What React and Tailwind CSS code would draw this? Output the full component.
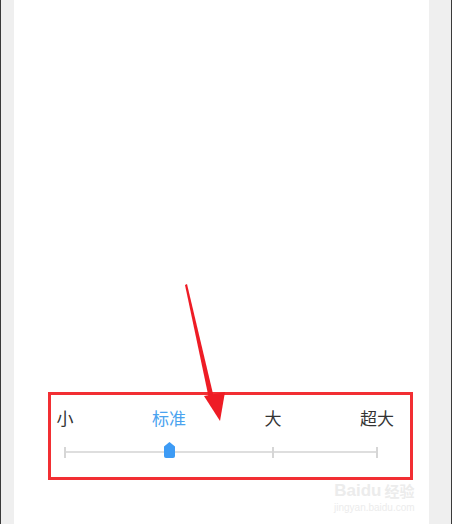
import React from 'react'

const sizes = ['小', '标准', '大', '超大']

export default function App() {
  const current = 1

  return (
    <div className="relative flex h-[524px] w-[452px] overflow-hidden bg-white" style={{ fontFamily: '"Noto Sans CJK SC", "Noto Sans", sans-serif' }}>
      <div className="w-px bg-[#3a3a3a]" />
      <div className="w-[13px] bg-[#efefef]" />
      <main className="flex-1 bg-white pt-[392px] pl-[34px]">
        <div className="w-[365px] h-[88px] border-[3px] border-[#f22f33]">
          {/* labels */}
          <div className="ml-[14px] mt-[10px] flex h-[24px] w-[312px] items-center justify-between">
            {sizes.map((s, i) => (
              <div key={s} className="flex w-0 justify-center">
                <span className={`whitespace-nowrap text-[17px] leading-none ${i === current ? 'text-[#4aa3ef]' : 'text-[#333]'}`}>
                  {s}
                </span>
              </div>
            ))}
          </div>
          {/* slider */}
          <div className="relative ml-[14px] mt-[17px] flex h-[12px] w-[312px] items-center justify-between">
            <div className="absolute left-0 right-0 top-[5px] h-[2px] bg-[#dedede]" />
            {sizes.map((s, i) => (
              <div key={s} className="relative flex w-0 justify-center">
                {i !== current && <div className="h-[11px] w-[2px] shrink-0 bg-[#d6d6d6]" />}
                {i === current && (
                  <svg className="absolute -top-[10px] shrink-0" width="11" height="16" viewBox="0 0 11 16">
                    <path d="M5.5 0 L11 4.5 L11 14 Q11 16 9 16 L2 16 Q0 16 0 14 L0 4.5 Z" fill="#3d9bf5" />
                  </svg>
                )}
              </div>
            ))}
          </div>
        </div>
      </main>
      <div className="w-[22px] bg-[#efefef]" />
      <div className="w-px bg-[#3a3a3a]" />

      {/* annotation arrow */}
      <svg className="pointer-events-none absolute left-0 top-0" width="452" height="524" viewBox="0 0 452 524">
        <path d="M185 285 L187 284 L214 398 L209 399 Z" fill="#ee1c25" />
        <path d="M204 396 L225 392 L220 421 Z" fill="#ee1c25" />
      </svg>

      {/* watermark */}
      <div className="pointer-events-none absolute left-[334px] top-[482px] flex flex-col items-center text-[#ececec]">
        <div className="flex items-center gap-[3px] leading-none">
          <span className="text-[17px] font-bold" style={{ fontFamily: '"Liberation Sans", sans-serif' }}>Baidu</span>
          <span className="text-[15px] font-bold">经验</span>
        </div>
        <span className="mt-[4px] text-[10px] leading-none" style={{ fontFamily: '"Liberation Sans", sans-serif' }}>jingyan.baidu.com</span>
      </div>
    </div>
  )
}
